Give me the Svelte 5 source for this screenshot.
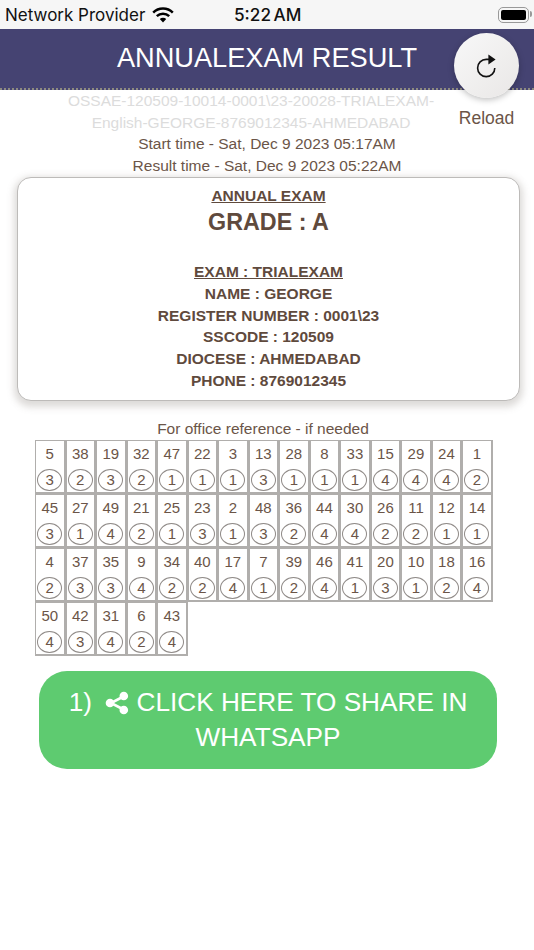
<script>
  const rows = [
    [[5,3],[38,2],[19,3],[32,2],[47,1],[22,1],[3,1],[13,3],[28,1],[8,1],[33,1],[15,4],[29,4],[24,4],[1,2]],
    [[45,3],[27,1],[49,4],[21,2],[25,1],[23,3],[2,1],[48,3],[36,2],[44,4],[30,4],[26,2],[11,2],[12,1],[14,1]],
    [[4,2],[37,3],[35,3],[9,4],[34,2],[40,2],[17,4],[7,1],[39,2],[46,4],[41,1],[20,3],[10,1],[18,2],[16,4]],
    [[50,4],[42,3],[31,4],[6,2],[43,4]]
  ];
  const answers = rows.flat();
</script>

<div class="page">
  <div class="statusbar">
    <div class="carrier">
      <span>Network Provider</span>
      <svg class="wifi" viewBox="0 0 22 16" width="22" height="16">
        <path d="M1.2 5.6a14 14 0 0 1 19.6 0" fill="none" stroke="#000" stroke-width="2.5" />
        <path d="M4.8 9.2a9 9 0 0 1 12.4 0" fill="none" stroke="#000" stroke-width="2.5" />
        <path d="M11 15.6l-3.2-3.5a4.6 4.6 0 0 1 6.4 0z" fill="#000" />
      </svg>
    </div>
    <div class="clock">5:22 AM</div>
    <div class="battery"><span></span></div>
  </div>

  <header class="topbar">
    <h1>ANNUALEXAM RESULT</h1>
  </header>

  <div class="reload">
    <button aria-label="Reload">
      <svg viewBox="0 0 24 24" width="24" height="26">
        <path d="M19.8 14a8.6 8.6 0 1 1-8.6-8.6h3" fill="none" stroke="#111" stroke-width="1.6" />
        <path d="M13.4 0.6l7.2 5-7.2 5z" fill="#111" />
      </svg>
    </button>
    <span>Reload</span>
  </div>

  <div class="info">
    <p class="hash">OSSAE-120509-10014-0001\23-20028-TRIALEXAM-<br />English-GEORGE-8769012345-AHMEDABAD</p>
    <p>Start time - Sat, Dec 9 2023 05:17AM</p>
    <p>Result time - Sat, Dec 9 2023 05:22AM</p>
  </div>

  <div class="card">
    <div class="u">ANNUAL EXAM</div>
    <div class="grade">GRADE : A</div>
    <div class="u">EXAM : TRIALEXAM</div>
    <div>NAME : GEORGE</div>
    <div>REGISTER NUMBER : 0001\23</div>
    <div>SSCODE : 120509</div>
    <div>DIOCESE : AHMEDABAD</div>
    <div>PHONE : 8769012345</div>
  </div>

  <div class="office">For office reference - if needed</div>

  <div class="answers">
    {#each answers as a}
      <div class="cell">
        <div class="q">{a[0]}</div>
        <div class="opt">{a[1]}</div>
      </div>
    {/each}
  </div>

  <button class="share">
    <span class="idx">1)</span>
    <svg viewBox="0 0 24 24" width="24" height="24">
      <path d="M18.5 5.5L6 12l12.5 6.5" fill="none" stroke="#fff" stroke-width="2.6" />
      <circle cx="18.8" cy="5" r="4.3" fill="#fff" />
      <circle cx="5" cy="12" r="4.3" fill="#fff" />
      <circle cx="18.8" cy="19" r="4.3" fill="#fff" />
    </svg>
    CLICK HERE TO SHARE IN WHATSAPP
  </button>
</div>

<style>
  :global(body) {
    margin: 0;
    background: #fff;
  }

  .page {
    position: relative;
    width: 534px;
    height: 950px;
    overflow: hidden;
    font-family: "Liberation Sans", Arial, sans-serif;
    color: #6b5548;
  }

  .statusbar {
    height: 29px;
    background: #f6f6f6;
    display: flex;
    align-items: center;
    padding: 0 5px;
    box-sizing: border-box;
    color: #111;
  }

  .carrier {
    display: flex;
    align-items: center;
    gap: 7px;
    width: 229px;
    font-size: 17px;
    font-family: "Inter", sans-serif;
  }

  .clock {
    font-size: 17.2px;
    font-weight: 500;
    word-spacing: -2px;
    font-family: "Inter", sans-serif;
  }

  .battery {
    position: relative;
    margin-left: auto;
    width: 31px;
    height: 16px;
    box-sizing: border-box;
    border: 1.5px solid #999;
    border-radius: 5px;
    padding: 2px;
  }

  .battery::after {
    content: "";
    position: absolute;
    right: -4px;
    top: 3.5px;
    width: 2px;
    height: 6px;
    background: #999;
    border-radius: 0 2px 2px 0;
  }

  .battery span {
    display: block;
    height: 100%;
    background: #000;
    border-radius: 2px;
  }

  .topbar {
    height: 59px;
    background: #454372;
    border-bottom: 2px dotted #8d8a80;
    box-sizing: content-box;
    display: flex;
    align-items: center;
    justify-content: center;
  }

  h1 {
    margin: 0 0 2px 0;
    font-size: 27.2px;
    font-weight: 400;
    color: #fff;
  }

  .reload {
    position: absolute;
    left: 440px;
    top: 33px;
    width: 93px;
    display: flex;
    flex-direction: column;
    align-items: center;
    font-size: 17.5px;
    gap: 10px;
  }

  .reload button {
    width: 65px;
    height: 65px;
    border: 0;
    padding: 0;
    border-radius: 50%;
    background: linear-gradient(135deg, #f8f8f8, #e9e7e6);
    box-shadow: 0 2px 6px rgba(0, 0, 0, 0.25);
    display: flex;
    align-items: center;
    justify-content: center;
  }

  .info {
    text-align: center;
    font-size: 15.5px;
    line-height: 21.7px;
  }

  .info p {
    margin: 0;
  }

  .hash {
    color: #dcdcdc;
    padding-right: 32px;
  }

  .card {
    margin: 0 14px 0 17px;
    height: 224px;
    box-sizing: border-box;
    padding-top: 7px;
    border: 1px solid #bdbbb9;
    border-radius: 14px;
    background: #fff;
    box-shadow: 0 3px 7px 3px rgba(120, 110, 105, 0.25);
    text-align: center;
    font-weight: 700;
    font-size: 15.5px;
    line-height: 21.9px;
    color: #5f4a3d;
  }

  .u {
    text-decoration: underline;
  }

  .grade {
    font-size: 23.3px;
    line-height: 30px;
    margin-bottom: 24px;
  }

  .office {
    margin-top: 19px;
    padding-right: 8px;
    text-align: center;
    font-size: 15.5px;
    line-height: 18px;
  }

  .answers {
    margin: 3px 0 0 36px;
    display: grid;
    grid-template-columns: repeat(15, 28.53px);
    grid-auto-rows: 52px;
    gap: 2px;
  }

  .cell {
    display: flex;
    flex-direction: column;
    align-items: center;
    font-size: 15px;
    background: #fff;
    outline: 1px solid #b0aeac;
    border-right: 1px solid #b0aeac;
    border-bottom: 1px solid #b0aeac;
    box-sizing: border-box;
  }

  .q {
    height: 28px;
    line-height: 25px;
  }

  .opt {
    width: 23px;
    height: 20px;
    line-height: 20px;
    text-align: center;
    border: 1px solid #8f8a87;
    border-radius: 50%;
  }

  .share {
    display: block;
    margin: 16px 0 0 39px;
    width: 458px;
    height: 98px;
    padding: 0 20px;
    border: 0;
    border-radius: 28px;
    background: #5ecb70;
    color: #fff;
    font-family: inherit;
    font-size: 26.2px;
    line-height: 34.5px;
    text-align: center;
  }

  .share svg {
    vertical-align: -4px;
  }

  .idx {
    margin-right: 6px;
  }
</style>
